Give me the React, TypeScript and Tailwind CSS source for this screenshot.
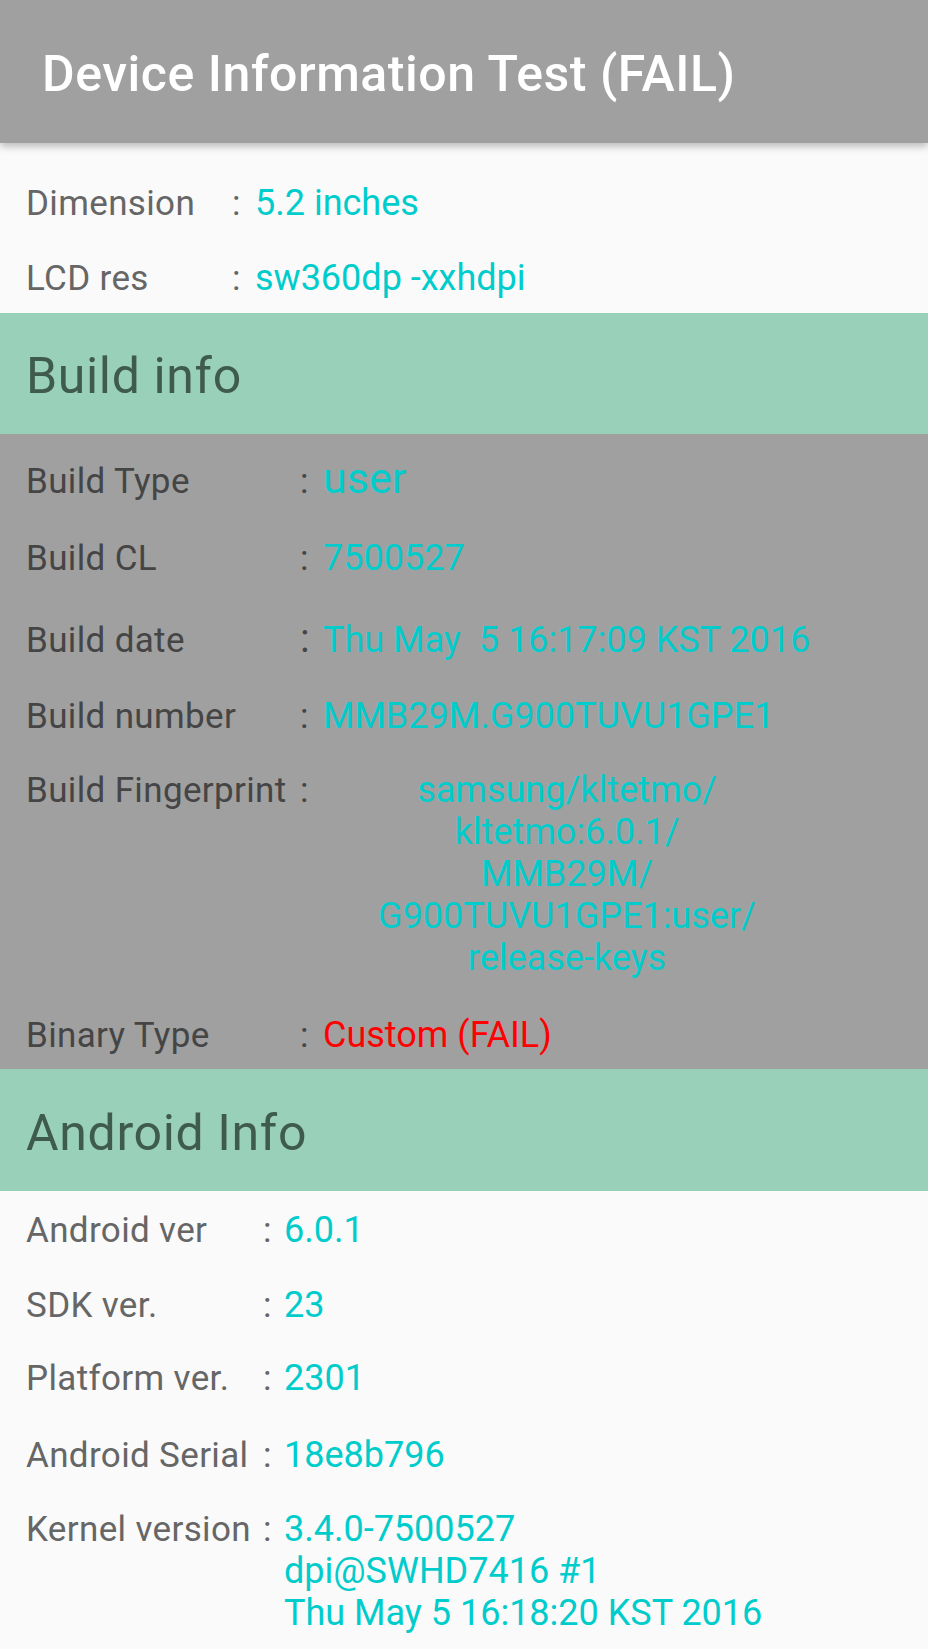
import React from "react";

const CYAN = "text-[#00cccc]";

function Row({
  label,
  labelW,
  colonW,
  dark,
  mt,
  h,
  children,
  colonClass,
}: {
  label: string;
  labelW: string;
  colonW: string;
  dark?: boolean;
  mt?: string;
  h?: string;
  children: React.ReactNode;
  colonClass?: string;
}) {
  return (
    <div className={`flex items-baseline leading-[42px] text-[35px] overflow-visible ${h ?? "h-[42px]"} ${mt ?? ""}`}>
      <span className={`${labelW} shrink-0 tracking-[0.35px] ${dark ? "text-[#454545]" : "text-[#666666]"}`}>{label}</span>
      <span className={`${colonW} shrink-0 ${dark ? "text-[#454545]" : "text-[#666666]"} ${colonClass ?? ""}`}>:</span>
      <div className="min-w-0 text-[36px] leading-[42px]">{children}</div>
    </div>
  );
}

export default function App() {
  return (
    <div
      className="w-[928px] h-[1649px] overflow-hidden bg-[#fafafa]"
      style={{ fontFamily: "Roboto, 'Noto Sans', sans-serif" }}
    >
      {/* Title bar */}
      <div className="relative z-10 h-[143px] bg-[#a0a0a0] flex items-center pl-[42px] pt-[4px] shadow-[0_3px_8px_rgba(0,0,0,0.28)]">
        <span className="text-white text-[50px] leading-[60px] font-medium tracking-[0.55px]">Device Information Test (FAIL)</span>
      </div>

      {/* Display info */}
      <div className="h-[170px] bg-[#fafafa] pl-[26px] pt-[39px]">
        <Row label="Dimension" labelW="w-[206px]" colonW="w-[23px]">
          <span className={CYAN}>5.2 inches</span>
        </Row>
        <Row label="LCD res" labelW="w-[206px]" colonW="w-[23px]" mt="mt-[33px]">
          <span className={CYAN}>sw360dp -xxhdpi</span>
        </Row>
      </div>

      {/* Build info header */}
      <div className="h-[121px] bg-[#99d0b9] pl-[26px] pt-[33px]">
        <div className="text-[#3f5b50] text-[50px] leading-[60px] tracking-[0.65px]">Build info</div>
      </div>

      {/* Build info rows */}
      <div className="h-[635px] bg-[#a0a0a0] pl-[26px] pt-[26px]">
        <Row label="Build Type" labelW="w-[274px]" colonW="w-[23px]" dark>
          <span className="text-[#00cccc] text-[43px] leading-[36px]">user</span>
        </Row>
        <Row label="Build CL" labelW="w-[274px]" colonW="w-[23px]" dark mt="mt-[35px]">
          <span className={CYAN}>7500527</span>
        </Row>
        <Row
          label="Build date"
          labelW="w-[274px]"
          colonW="w-[23px]"
          dark
          mt="mt-[40px]"
          colonClass="text-[40px] leading-[38px]"
        >
          <span className={`${CYAN} whitespace-pre`}>Thu May  5 16:17:09 KST 2016</span>
        </Row>
        <Row label="Build number" labelW="w-[274px]" colonW="w-[23px]" dark mt="mt-[34px]">
          <span className={CYAN}>MMB29M.G900TUVU1GPE1</span>
        </Row>
        <Row label="Build Fingerprint" labelW="w-[274px]" colonW="w-[23px]" dark mt="mt-[32px]" h="h-[210px]">
          <div className={`${CYAN} w-[488px] text-center`}>
            samsung/kltetmo/
            <br />
            kltetmo:6.0.1/
            <br />
            MMB29M/
            <br />
            G900TUVU1GPE1:user/
            <br />
            release-keys
          </div>
        </Row>
        <Row label="Binary Type" labelW="w-[274px]" colonW="w-[23px]" dark mt="mt-[35px]">
          <span className="text-[#ff0000]">Custom (FAIL)</span>
        </Row>
      </div>

      {/* Android info header */}
      <div className="h-[122px] bg-[#99d0b9] pl-[26px] pt-[34px]">
        <div className="text-[#3f5b50] text-[50px] leading-[60px] tracking-[0.65px]">Android Info</div>
      </div>

      {/* Android rows */}
      <div className="h-[458px] bg-[#fafafa] pl-[26px] pt-[18px]">
        <Row label="Android ver" labelW="w-[237px]" colonW="w-[21px]">
          <span className={CYAN}>6.0.1</span>
        </Row>
        <Row label="SDK ver." labelW="w-[237px]" colonW="w-[21px]" mt="mt-[33px]">
          <span className={CYAN}>23</span>
        </Row>
        <Row label="Platform ver." labelW="w-[237px]" colonW="w-[21px]" mt="mt-[31px]">
          <span className={CYAN}>2301</span>
        </Row>
        <Row label="Android Serial" labelW="w-[237px]" colonW="w-[21px]" mt="mt-[35px]">
          <span className={CYAN}>18e8b796</span>
        </Row>
        <Row label="Kernel version" labelW="w-[237px]" colonW="w-[21px]" mt="mt-[32px]" h="h-[126px]">
          <div className={CYAN}>
            3.4.0-7500527
            <br />
            dpi@SWHD7416 #1
            <br />
            Thu May 5 16:18:20 KST 2016
          </div>
        </Row>
      </div>
    </div>
  );
}
